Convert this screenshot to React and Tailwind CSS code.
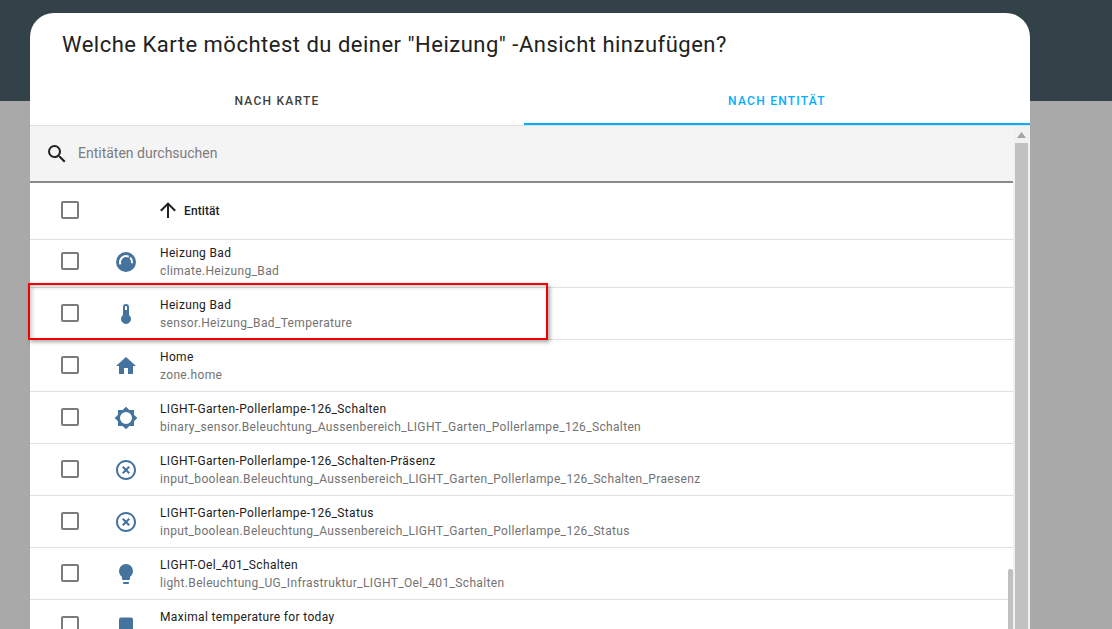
const I = {
  gauge: "M12 2a10 10 0 1 0 0 20 10 10 0 0 0 0-20ZM5.6 14.8A7 7 0 0 1 15.2 5.8L14.3 7.5A5.1 5.1 0 0 0 7.4 14ZM16.6 6.8A7 7 0 0 1 18.8 13.5L16.9 13.1A5.1 5.1 0 0 0 15.5 8.5Z",
  therm: "M15 13V5A3 3 0 0 0 9 5V13A5 5 0 1 0 15 13M12 4A1 1 0 0 1 13 5V8H11V5A1 1 0 0 1 12 4Z",
  home: "M10,20V14H14V20H19V12H22L12,3L2,12H5V20H10Z",
  sun: "M20,15.31L23.31,12L20,8.69V4H15.31L12,0.69L8.69,4H4V8.69L0.69,12L4,15.31V20H8.69L12,23.31L15.31,20H20V15.31M12,18A6,6 0 0,1 6,12A6,6 0 0,1 12,6A6,6 0 0,1 18,12A6,6 0 0,1 12,18Z",
  close: "M12,20C7.59,20 4,16.41 4,12C4,7.59 7.59,4 12,4C16.41,4 20,7.59 20,12C20,16.41 16.41,20 12,20M12,2C6.47,2 2,6.47 2,12C2,17.53 6.47,22 12,22C17.53,22 22,17.53 22,12C22,6.47 17.53,2 12,2M14.59,8L12,10.59L9.41,8L8,9.41L10.59,12L8,14.59L9.41,16L12,13.41L14.59,16L16,14.59L13.41,12L16,9.41L14.59,8Z",
  bulb: "M12,2A7,7 0 0,0 5,9C5,11.38 6.19,13.47 8,14.74V17A1,1 0 0,0 9,18H15A1,1 0 0,0 16,17V14.74C17.81,13.47 19,11.38 19,9A7,7 0 0,0 12,2M9,21A1,1 0 0,0 10,22H14A1,1 0 0,0 15,21V20H9V21Z",
  square: "M5 5.5a2 2 0 0 1 2-2h10a2 2 0 0 1 2 2V24H5Z",
};

const rows = [
  ["gauge", "Heizung Bad", "climate.Heizung_Bad"],
  ["therm", "Heizung Bad", "sensor.Heizung_Bad_Temperature"],
  ["home", "Home", "zone.home"],
  ["sun", "LIGHT-Garten-Pollerlampe-126_Schalten", "binary_sensor.Beleuchtung_Aussenbereich_LIGHT_Garten_Pollerlampe_126_Schalten"],
  ["close", "LIGHT-Garten-Pollerlampe-126_Schalten-Präsenz", "input_boolean.Beleuchtung_Aussenbereich_LIGHT_Garten_Pollerlampe_126_Schalten_Praesenz"],
  ["close", "LIGHT-Garten-Pollerlampe-126_Status", "input_boolean.Beleuchtung_Aussenbereich_LIGHT_Garten_Pollerlampe_126_Status"],
  ["bulb", "LIGHT-Oel_401_Schalten", "light.Beleuchtung_UG_Infrastruktur_LIGHT_Oel_401_Schalten"],
  ["square", "Maximal temperature for today", ""],
];

function Box() {
  return <div className="w-[18px] h-[18px] mb-[2px] shrink-0 border-2 border-[#7b7b7b] rounded-[2px] bg-white" />;
}

function Row({ icon, name, id, first }) {
  return (
    <div className={`flex items-center border-b border-[#e0e0e0] shrink-0 ${first ? "h-[48px] pb-[3px]" : "h-[52px]"}`}>
      <div className="w-[80px] flex justify-center"><Box /></div>
      <div className="w-[32px] flex justify-center">
        <svg width="24" height="24" viewBox="0 0 24 24" fill="#44739e" fillRule="evenodd"><path d={I[icon]} /></svg>
      </div>
      <div className="pl-[18px] flex flex-col tracking-[0.345px]">
        <div className="text-[12px] leading-[18px] text-[#212121]">{name}</div>
        <div className="text-[12px] leading-[18px] h-[18px] text-[#727272]">{id}</div>
      </div>
    </div>
  );
}

export default function App() {
  return (
    <div className="relative h-[629px] overflow-hidden bg-[#a9a9a9] [font-family:Roboto,sans-serif]">
      <div className="h-[101px] bg-[#334249]" />
      <div className="absolute left-[30px] top-[13px] w-[1000px] h-[640px] bg-white rounded-[24px] flex flex-col overflow-hidden">
        <div className="h-[64px] shrink-0 pl-[32px] pt-[16px] text-[22px] tracking-[0.5px] leading-[32px] text-[#212121]">
          Welche Karte möchtest du deiner "Heizung" -Ansicht hinzufügen?
        </div>
        <div className="h-[49px] shrink-0 flex border-b border-[#e0e0e0]">
          <div className="w-[494px] h-[48px] flex items-center justify-center text-[12px] font-medium tracking-[1.25px] text-[#3f3f3f]">NACH KARTE</div>
          <div className="flex-1 h-[48px] pt-[2px] flex items-center justify-center text-[12px] font-medium tracking-[1.25px] text-[#03aeff] border-b-2 border-[#03aeff]">NACH ENTITÄT</div>
        </div>
        <div className="flex flex-1 min-h-0">
          <div className="relative flex-1 min-w-0 overflow-hidden">
            <div className="h-[57px] bg-[#f4f4f4] border-b-2 border-[#8b8b8b] flex items-center pl-[15px] gap-[9px]">
              <svg width="24" height="24" viewBox="0 0 24 24" fill="#212121"><path d="M9.5,3A6.5,6.5 0 0,1 16,9.5C16,11.11 15.41,12.59 14.44,13.73L14.71,14H15.5L20.5,19L19,20.5L14,15.5V14.71L13.73,14.44C12.59,15.41 11.11,16 9.5,16A6.5,6.5 0 0,1 3,9.5A6.5,6.5 0 0,1 9.5,3M9.5,5C7,5 5,7 5,9.5C5,12 7,14 9.5,14C12,14 14,12 14,9.5C14,7 12,5 9.5,5Z" /></svg>
              <span className="text-[14px] text-[#7c7c7c]">Entitäten durchsuchen</span>
            </div>
            <div className="h-[57px] flex items-center border-b border-[#e0e0e0]">
              <div className="w-[80px] flex justify-center"><Box /></div>
              <div className="w-[32px]" />
              <div className="pl-[14px] flex items-center gap-[4px]">
                <svg className="mb-[2px]" width="24" height="24" viewBox="0 0 24 24" fill="#212121"><path d="M13,20H11V8L5.5,13.5L4.08,12.08L12,4.16L19.92,12.08L18.5,13.5L13,8V20Z" /></svg>
                <span className="text-[12px] font-medium tracking-[0.1px] text-[#212121]">Entität</span>
              </div>
            </div>
            {rows.map((r, i) => <Row key={i} icon={r[0]} name={r[1]} id={r[2]} first={i === 0} />)}
            <div className="absolute right-0 top-[443px] w-[5px] h-[100px] bg-[#c0c0c0] rounded-t-[2px]" />
          </div>
          <div className="relative w-[17px] bg-[#f1f1f1] shrink-0">
            <svg className="absolute left-[4px] top-[6px]" width="9" height="6" viewBox="0 0 9 6" fill="#a3a3a3"><path d="M4.5 0 9 6H0Z" /></svg>
            <div className="absolute left-[2px] top-[17px] w-[13px] h-[600px] bg-[#c1c1c1]" />
          </div>
        </div>
      </div>
      <div className="absolute left-[28px] top-[283px] w-[520px] h-[57px] border-[2px] border-[#f50000] shadow-[2px_2px_4px_rgba(0,0,0,0.35),inset_2px_2px_4px_rgba(0,0,0,0.2)]" />
    </div>
  );
}
